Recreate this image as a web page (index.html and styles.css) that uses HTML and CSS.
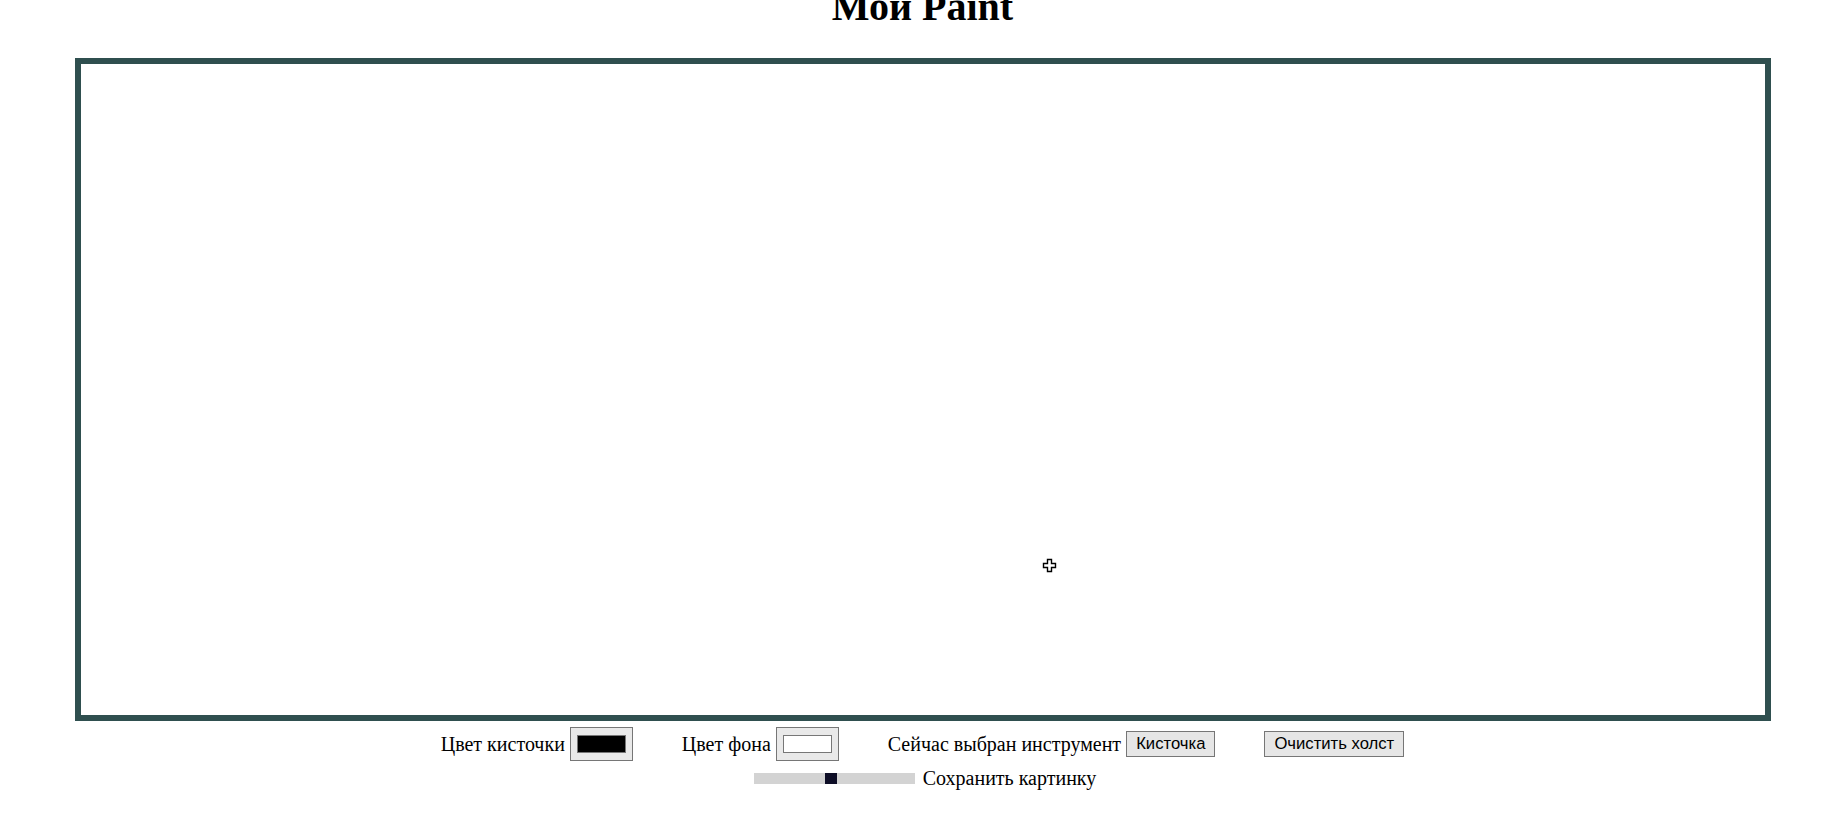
FILE: index.html
```html
<!DOCTYPE html>
<html lang="ru">
<head>
<meta charset="utf-8">
<title>Мой Paint</title>
<link rel="stylesheet" href="styles.css">
</head>
<body>
<h1 class="title">Мой Paint</h1>
<div class="canvas">
  <svg class="cursor" width="15" height="15" viewBox="0 0 15 15"><path d="M5.5 1.5h4v4h4v4h-4v4h-4v-4h-4v-4h4z" fill="#fff" stroke="#000" stroke-width="1.4"/></svg>
</div>
<div class="controls">
  <div class="group"><span class="label">Цвет кисточки</span><span class="color-input"><span class="swatch swatch-black"></span></span></div>
  <div class="group"><span class="label">Цвет фона</span><span class="color-input"><span class="swatch swatch-white"></span></span></div>
  <div class="group"><span class="label">Сейчас выбран инструмент</span><button class="btn">Кисточка</button></div>
  <div class="group"><button class="btn">Очистить холст</button></div>
</div>
<div class="controls2">
  <div class="slider"><span class="thumb"></span></div>
  <span class="label">Сохранить картинку</span>
</div>
</body>
</html>
```
FILE: styles.css
```css
html, body {
  margin: 0;
  padding: 0;
  background: #fff;
  font-family: "Liberation Serif", "Times New Roman", serif;
  font-size: 20px;
  color: #000;
  overflow: hidden;
}
.title {
  font-size: 40px;
  font-weight: bold;
  line-height: 40px;
  text-align: center;
  margin: -13px 0 31px;
}
.canvas {
  position: relative;
  width: 1684px;
  height: 651px;
  border: 6px solid #2f4f4f;
  margin: 0 auto;
  background: #fff;
}
.cursor {
  position: absolute;
  left: 961px;
  top: 494px;
}
.controls {
  display: flex;
  justify-content: center;
  align-items: center;
  gap: 49px;
  margin-top: 6px;
}
.group {
  display: flex;
  align-items: center;
  gap: 5px;
}
.label {
  line-height: 23px;
}
.color-input {
  box-sizing: border-box;
  display: flex;
  width: 63px;
  height: 34px;
  padding: 7px 6px;
  border: 1px solid #767676;
  background: #e9e9e9;
}
.swatch {
  flex: 1;
  border: 1px solid #777;
}
.swatch-black { background: #000; }
.swatch-white { background: #fff; }
.btn {
  box-sizing: border-box;
  font-family: "Liberation Sans", Arial, sans-serif;
  font-size: 16.67px;
  height: 26px;
  padding: 1px 9px;
  border: 1px solid #767676;
  background: #e6e6e6;
  color: #000;
  border-radius: 0;
  line-height: 20px;
}
.controls2 {
  display: flex;
  justify-content: center;
  align-items: center;
  gap: 8px;
  margin-top: 6px;
  padding-left: 5px;
}
.slider {
  position: relative;
  width: 161px;
  height: 11px;
  background: #d3d3d3;
}
.thumb {
  position: absolute;
  left: 71px;
  top: 0;
  width: 12px;
  height: 11px;
  background: #0d0d26;
}
```
